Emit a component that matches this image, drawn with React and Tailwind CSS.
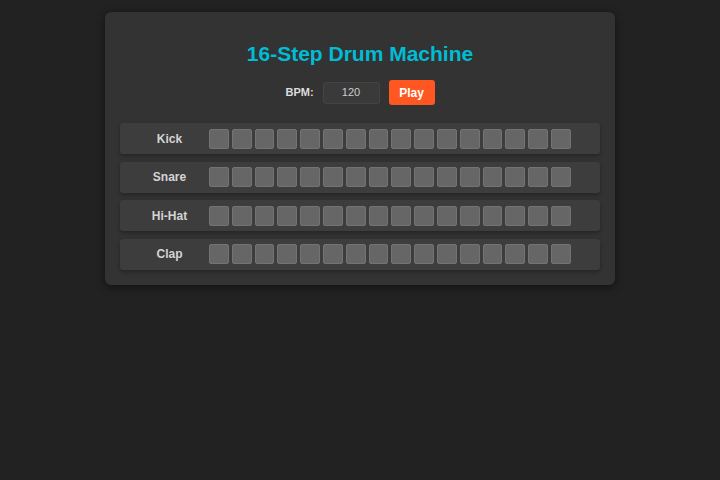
import React from "react";

const tracks = ["Kick", "Snare", "Hi-Hat", "Clap"];
const steps = Array.from({ length: 16 }, (_, i) => i);

export default function App() {
  return (
    <div
      className="min-h-[480px] w-full bg-[#222222] pt-3"
      style={{ fontFamily: '"Liberation Sans", Arial, sans-serif' }}
    >
      <div className="mx-auto w-[510px] rounded-md bg-[#333333] px-[15px] pb-[15px] pt-[28px] shadow-[0_2px_8px_rgba(0,0,0,0.5)]">
        <h1 className="text-center text-[21px] font-bold leading-[27px] text-[#00bcd4]">
          16-Step Drum Machine
        </h1>
        <div className="mt-[13px] flex items-center justify-center">
          <span className="text-[11px] font-bold text-[#dddddd]">BPM:</span>
          <div className="ml-[9px] flex h-[22px] w-[57px] items-center justify-center rounded-[3px] border border-[#444444] bg-[#3a3a3a] text-[11px] text-[#cccccc]">
            120
          </div>
          <button className="ml-[9px] h-[25px] w-[46px] rounded-[3px] bg-[#ff5722] text-[12px] font-bold text-white">
            Play
          </button>
        </div>
        <div className="mt-[18px] flex flex-col gap-[7.5px]">
          {tracks.map((t) => (
            <div
              key={t}
              className="flex h-[31px] items-center rounded-[3px] bg-[#3d3d3d] shadow-[0_2px_4px_rgba(0,0,0,0.3)]"
            >
              <div className="w-[89px] pl-[10px] text-center text-[12px] font-bold text-[#d4d4d4]">
                {t}
              </div>
              <div className="flex gap-[3px]">
                {steps.map((s) => (
                  <div
                    key={s}
                    className="h-[20px] w-[19.8px] rounded-[2px] border border-[#737373] bg-[#666666]"
                  />
                ))}
              </div>
            </div>
          ))}
        </div>
      </div>
    </div>
  );
}
